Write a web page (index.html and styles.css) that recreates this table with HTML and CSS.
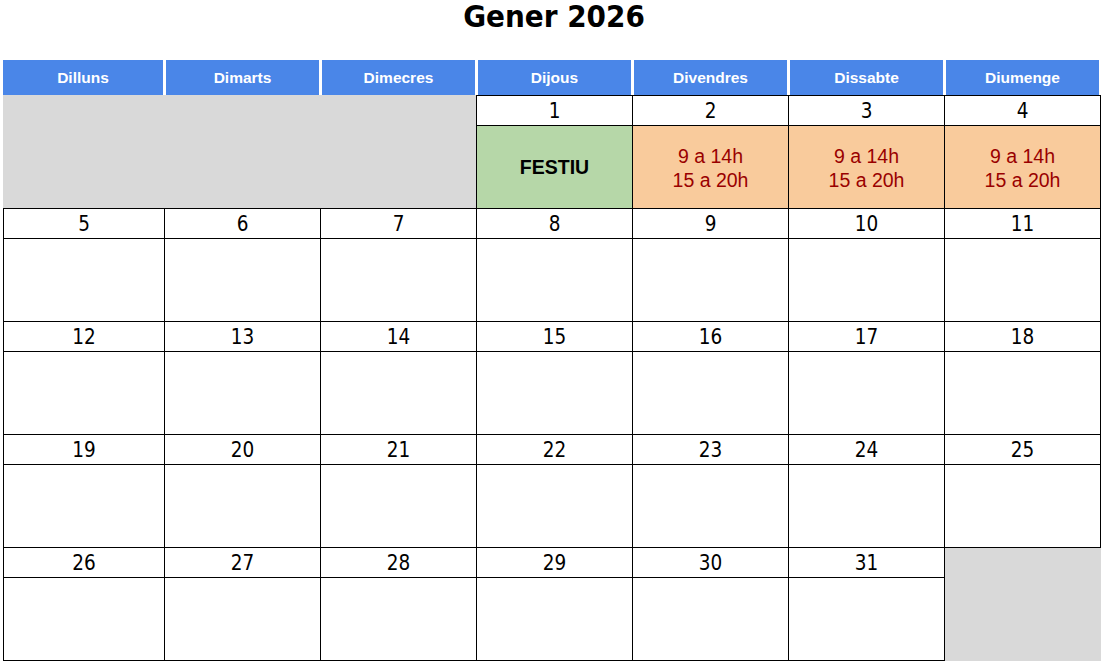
FILE: index.html
```html
<!DOCTYPE html>
<html lang="ca">
<head>
<meta charset="utf-8">
<title>Gener 2026</title>
<link rel="stylesheet" href="styles.css">
</head>
<body>
<h1 class="title">Gener 2026</h1>
<div class="cal">
  <div class="hd"><span>Dilluns</span></div>
  <div class="hd"><span>Dimarts</span></div>
  <div class="hd"><span>Dimecres</span></div>
  <div class="hd"><span>Dijous</span></div>
  <div class="hd"><span>Divendres</span></div>
  <div class="hd"><span>Dissabte</span></div>
  <div class="hd"><span>Diumenge</span></div>

  <div class="blank blank-start"></div>
  <div class="num top">1</div>
  <div class="num top">2</div>
  <div class="num top">3</div>
  <div class="num top">4</div>
  <div class="day festiu">FESTIU</div>
  <div class="day hours">9 a 14h<br>15 a 20h</div>
  <div class="day hours">9 a 14h<br>15 a 20h</div>
  <div class="day hours">9 a 14h<br>15 a 20h</div>

  <div class="num c1">5</div><div class="num">6</div><div class="num">7</div><div class="num">8</div><div class="num">9</div><div class="num">10</div><div class="num">11</div>
  <div class="day c1"></div><div class="day"></div><div class="day"></div><div class="day"></div><div class="day"></div><div class="day"></div><div class="day"></div>

  <div class="num c1">12</div><div class="num">13</div><div class="num">14</div><div class="num">15</div><div class="num">16</div><div class="num">17</div><div class="num">18</div>
  <div class="day c1"></div><div class="day"></div><div class="day"></div><div class="day"></div><div class="day"></div><div class="day"></div><div class="day"></div>

  <div class="num c1">19</div><div class="num">20</div><div class="num">21</div><div class="num">22</div><div class="num">23</div><div class="num">24</div><div class="num">25</div>
  <div class="day c1"></div><div class="day"></div><div class="day"></div><div class="day"></div><div class="day"></div><div class="day"></div><div class="day"></div>

  <div class="blank blank-end"></div>
  <div class="num c1">26</div><div class="num">27</div><div class="num">28</div><div class="num">29</div><div class="num">30</div><div class="num">31</div>
  <div class="day c1"></div><div class="day"></div><div class="day"></div><div class="day"></div><div class="day"></div><div class="day"></div>
</div>
</body>
</html>
```

FILE: styles.css
```css
* { box-sizing: border-box; }

html, body {
  margin: 0;
  padding: 0;
  background: #ffffff;
}

.title {
  margin: 0;
  height: 60px;
  padding-top: 0;
  text-align: center;
  font-family: "DejaVu Sans Condensed", "DejaVu Sans", sans-serif;
  font-stretch: condensed;
  font-weight: bold;
  font-size: 31px;
  line-height: 32px;
  color: #000000;
  padding-left: 3px;
}

.cal {
  margin-left: 3px;
  width: 1098px;
  display: grid;
  grid-template-columns: 162px repeat(6, 156px);
  grid-template-rows: 35px 31px 83px 30px 83px 30px 83px 30px 83px 30px 83px;
}

.hd {
  display: flex;
  padding: 0 2px 0 1px;
}
.hd:first-child { padding-left: 0; }
.hd span {
  flex: 1;
  background: #4a86e8;
  color: #ffffff;
  font-family: "Liberation Sans", Arial, sans-serif;
  font-weight: bold;
  font-size: 15.5px;
  display: flex;
  align-items: center;
  justify-content: center;
}

.num {
  border-right: 1px solid #000;
  border-bottom: 1px solid #000;
  font-family: "DejaVu Sans Condensed", "DejaVu Sans", sans-serif;
  font-stretch: condensed;
  font-size: 20.5px;
  color: #000;
  display: flex;
  align-items: center;
  justify-content: center;
  padding-top: 1px;
}
.num.top { border-top: 1px solid #000; }

.day {
  border-right: 1px solid #000;
  border-bottom: 1px solid #000;
  display: flex;
  align-items: center;
  justify-content: center;
  text-align: center;
  font-family: "Liberation Sans", Arial, sans-serif;
}

.c1 { border-left: 1px solid #000; }

.festiu {
  background: #b6d7a8;
  font-weight: bold;
  font-size: 19.5px;
  color: #000;
  padding-top: 1px;
}

.hours {
  background: #f9cb9c;
  color: #990000;
  font-size: 19.5px;
  line-height: 24px;
  padding-top: 1px;
}

.blank { background: #d9d9d9; }
.blank-start {
  grid-column: 1 / 4;
  grid-row: 2 / 4;
  border-right: 1px solid #000;
  border-bottom: 1px solid #000;
}
.blank-end {
  grid-column: 7;
  grid-row: 10 / 12;
}
```
